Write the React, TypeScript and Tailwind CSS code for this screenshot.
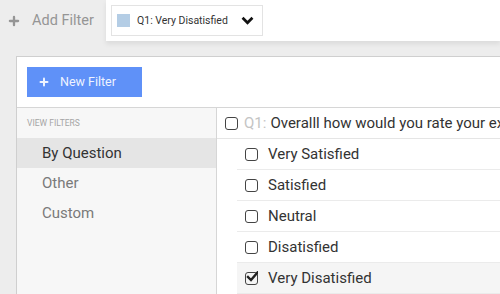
import { Plus } from 'lucide-react'

const ANSWERS = [
  { label: 'Very Satisfied', checked: false },
  { label: 'Satisfied', checked: false },
  { label: 'Neutral', checked: false },
  { label: 'Disatisfied', checked: false },
  { label: 'Very Disatisfied', checked: true },
]

function Box({ checked = false }: { checked?: boolean }) {
  return (
    <span className="relative flex h-[13px] w-[13px] shrink-0 items-center justify-center rounded-[3px] border-[1.5px] border-[#444]">
      {checked && (
        <svg viewBox="0 0 12 12" className="absolute -top-[2px] left-[0px] h-[12px] w-[12px]">
          <path d="M2 6 L5 9 L11.5 1.5" fill="none" stroke="#222" strokeWidth="2.4" strokeLinecap="square" />
        </svg>
      )}
    </span>
  )
}

export default function App() {
  return (
    <div className="h-[294px] w-[500px] overflow-hidden bg-[#ededed] font-['Roboto',sans-serif]">
      {/* Top bar */}
      <div className="flex h-[41px] items-center">
        <div className="flex w-[106px] items-center gap-[11px] pl-[7px] text-[14.5px] text-[#959595]">
          <Plus className="h-[14px] w-[14px]" strokeWidth={4} />
          <span>Add Filter</span>
        </div>
        <div className="flex h-[41px] flex-1 items-center bg-white pl-[5px] shadow-[0_3px_5px_rgba(0,0,0,0.08)]">
          <div className="flex h-[31px] w-[152px] items-center border border-[#e3e3e3] pl-[5px]">
            <span className="h-[13px] w-[13px] bg-[#b4cde5]" />
            <span className="ml-[7px] text-[10.5px] text-[#333]">Q1: Very Disatisfied</span>
            <svg viewBox="0 0 14 10" className="ml-auto mr-[8px] h-[9px] w-[13px]">
              <path d="M1.5 2 L7 7.5 L12.5 2" fill="none" stroke="#111" strokeWidth="3" />
            </svg>
          </div>
        </div>
      </div>

      {/* Panel */}
      <div className="ml-[16px] mt-[15px] h-[260px] border-l border-t border-[#cfcfcf] bg-white">
        <div className="h-[51px] border-b border-[#d6d6d6] px-[10px] pt-[10px]">
          <button className="flex h-[30px] w-[115px] items-center gap-[10px] bg-[#5f91f8] pl-[11px] text-[12.5px] text-[#eef3ff]">
            <Plus className="h-[12px] w-[12px]" strokeWidth={4} />
            New Filter
          </button>
        </div>
        <div className="flex h-full">
          <div className="w-[200px] shrink-0 border-r border-[#d6d6d6] bg-[#f7f7f7]">
            <div className="flex h-[30px] items-center pl-[10px] text-[8.5px] uppercase text-[#a5a5a5]">View Filters</div>
            <div className="flex h-[30px] items-center bg-[#e5e5e5] pl-[25px] text-[15px] text-[#333]">By Question</div>
            <div className="flex h-[30px] items-center pl-[25px] text-[15px] text-[#7a7a7a]">Other</div>
            <div className="flex h-[30px] items-center pl-[25px] text-[15px] text-[#7a7a7a]">Custom</div>
          </div>
          <div className="flex-1 overflow-hidden">
            <div className="flex h-[31px] items-center gap-[6px] whitespace-nowrap border-b border-[#e5e5e5] pl-[8px] text-[15px]">
              <Box />
              <span className="text-[#c4c4c4]">Q1:</span>
              <span className="-ml-[2px] text-[#333]">Overalll how would you rate your experience</span>
            </div>
            <div className="ml-[20px]">
              {ANSWERS.map((a) => (
                <div
                  key={a.label}
                  className={`flex h-[31px] items-center gap-[10px] border-b border-[#ebebeb] pl-[8px] text-[15px] text-[#333] ${a.checked ? 'bg-[#f5f5f5]' : ''}`}
                >
                  <Box checked={a.checked} />
                  <span>{a.label}</span>
                </div>
              ))}
            </div>
          </div>
        </div>
      </div>
    </div>
  )
}
